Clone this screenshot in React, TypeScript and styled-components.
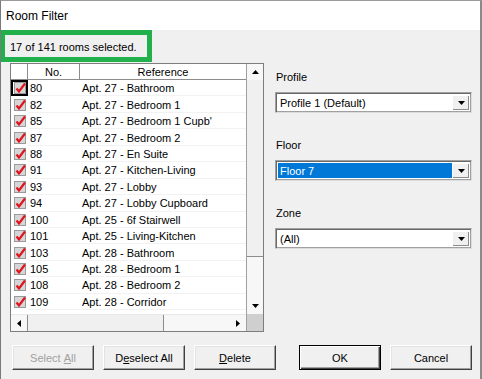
import React from "react";
import styled, { createGlobalStyle, css } from "styled-components";

const GlobalStyle = createGlobalStyle`
  html, body {
    margin: 0;
    padding: 0;
    background: #f0f0f0;
  }
  body {
    font-family: "Liberation Sans", Arial, sans-serif;
    font-size: 11px;
    color: #000;
  }
`;

const rooms = [
  { no: 80, ref: "Apt. 27 - Bathroom" },
  { no: 82, ref: "Apt. 27 - Bedroom 1" },
  { no: 85, ref: "Apt. 27 - Bedroom 1 Cupb'" },
  { no: 87, ref: "Apt. 27 - Bedroom 2" },
  { no: 88, ref: "Apt. 27 - En Suite" },
  { no: 91, ref: "Apt. 27 - Kitchen-Living" },
  { no: 93, ref: "Apt. 27 - Lobby" },
  { no: 94, ref: "Apt. 27 - Lobby Cupboard" },
  { no: 100, ref: "Apt. 25 - 6f Stairwell" },
  { no: 101, ref: "Apt. 25 - Living-Kitchen" },
  { no: 103, ref: "Apt. 28 - Bathroom" },
  { no: 105, ref: "Apt. 28 - Bedroom 1" },
  { no: 108, ref: "Apt. 28 - Bedroom 2" },
  { no: 109, ref: "Apt. 28 - Corridor" },
];

const Window = styled.div`
  width: 482px;
  height: 379px;
  box-sizing: border-box;
  display: flex;
  flex-direction: column;
  border-left: 1px solid #7a7a7a;
  border-right: 2px solid #8a8a8a;
  border-top: 1px solid #9a9a9a;
  overflow: hidden;
`;

const TitleBar = styled.div`
  height: 29px;
  flex: none;
  background: #fff;
  display: flex;
  align-items: center;
  padding-left: 5px;
  font-size: 12px;
`;

const Body = styled.div`
  flex: 1;
  background: #f0f0f0;
  display: flex;
  flex-direction: column;
`;

const Status = styled.div`
  width: 152px;
  height: 32px;
  box-sizing: border-box;
  margin-left: -1px;
  border: 5px solid #22b04c;
  display: flex;
  align-items: center;
  padding-left: 5px;
  padding-top: 2px;
`;

const Main = styled.div`
  display: flex;
  margin-top: 1px;
  padding-left: 9px;
`;

const ListBox = styled.div`
  width: 254px;
  height: 269px;
  box-sizing: border-box;
  border: 1px solid #7d7d7d;
  background: #fff;
  display: grid;
  grid-template-columns: 1fr 17px;
  grid-template-rows: 1fr 17px;
`;

const Table = styled.div`
  display: grid;
  grid-template-columns: 17px 52px 1fr;
  grid-auto-rows: 16.45px;
  grid-template-rows: 16px;
  align-content: start;
  overflow: hidden;
`;

const HeadCell = styled.div<{ $last?: boolean }>`
  display: flex;
  align-items: center;
  justify-content: center;
  border-bottom: 1px solid #8c8c8c;
  border-right: ${(p) => (p.$last ? "none" : "1px solid #8c8c8c")};
  background: #fff;
  padding-top: 1px;
`;

const CheckCell = styled.div<{ $focus?: boolean }>`
  display: flex;
  align-items: center;
  justify-content: center;
  box-sizing: border-box;
  ${(p) =>
    p.$focus &&
    css`
      outline: 2px solid #000;
      outline-offset: -2px;
    `}
`;

const Cell = styled.div`
  display: flex;
  align-items: center;
  padding-left: 2px;
  padding-top: 1px;
  border-bottom: 1px solid #f2f2f2;
  white-space: nowrap;
  overflow: hidden;
`;

const VScroll = styled.div`
  display: flex;
  flex-direction: column;
  border-left: 1px solid #a0a0a0;
  background: #f7f7f7;
`;

const HScroll = styled.div`
  display: flex;
  border-top: 1px solid #e8e8e8;
  background: #f7f7f7;
`;

const ArrowBtn = styled.div`
  width: 16px;
  height: 16px;
  flex: none;
  display: flex;
  align-items: center;
  justify-content: center;
`;

const VThumb = styled.div`
  height: 176px;
  background: #f0f0f0;
  border-bottom: 1px solid #8c8c8c;
`;

const HThumb = styled.div`
  width: 135px;
  background: #f0f0f0;
  border-left: 1px solid #8c8c8c;
  border-right: 1px solid #8c8c8c;
`;

const Track = styled.div`
  flex: 1;
`;

const Corner = styled.div`
  background: #cfcfcf;
  border-left: 1px solid #a0a0a0;
`;

const Side = styled.div`
  width: 197px;
  margin-left: 11px;
  padding-top: 7px;
  display: flex;
  flex-direction: column;
`;

const Field = styled.div`
  display: flex;
  flex-direction: column;
  gap: 8px;
  margin-bottom: 25px;
`;

const Label = styled.div`
  height: 14px;
  line-height: 14px;
  padding-left: 1px;
`;

const Select = styled.div`
  height: 21px;
  box-sizing: border-box;
  display: flex;
  background: #fff;
  border: 1px solid;
  border-color: #a0a0a0 #dcdcdc #dcdcdc #a0a0a0;
  box-shadow: inset 1px 1px 0 #696969, inset -1px -1px 0 #a0a0a0;
  padding: 2px;
`;

const SelectText = styled.div<{ $selected?: boolean }>`
  flex: 1;
  display: flex;
  align-items: center;
  padding-left: 2px;
  ${(p) =>
    p.$selected &&
    css`
      background: #0078d7;
      color: #fff;
    `}
`;

const DropBtn = styled.div`
  width: 16px;
  flex: none;
  display: flex;
  align-items: center;
  justify-content: center;
  background: #f0f0f0;
  border-left: 1px solid #fff;
  border-top: 1px solid #fff;
  box-shadow: inset -1px -1px 0 #8c8c8c;
`;

const ButtonRow = styled.div`
  display: flex;
  margin-top: 13px;
  padding-left: 11px;
  padding-right: 8px;
`;

const Group = styled.div<{ $right?: boolean }>`
  display: flex;
  gap: 9px;
  margin-left: ${(p) => (p.$right ? "auto" : "0")};
`;

const Button = styled.div<{ $disabled?: boolean; $default?: boolean }>`
  width: 82px;
  height: 25px;
  box-sizing: border-box;
  display: flex;
  align-items: center;
  justify-content: center;
  background: #f0f0f0;
  border: 1px solid;
  border-color: #fff #404040 #404040 #fff;
  box-shadow: inset -1px -1px 0 #a0a0a0, inset 1px 1px 0 #e3e3e3;
  color: ${(p) => (p.$disabled ? "#a0a0a0" : "#000")};
  ${(p) =>
    p.$default &&
    css`
      border-color: #000;
      box-shadow: inset 1px 1px 0 #fff, inset -1px -1px 0 #404040,
        inset -2px -2px 0 #a0a0a0;
    `}
  u {
    text-decoration-thickness: 1px;
  }
`;

const CheckIcon = () => (
  <svg width="14" height="14" viewBox="0 0 14 14">
    <rect x="1.5" y="1.5" width="11" height="11" fill="#d6d6d6" stroke="#9a9a9a" />
    <polyline
      points="3.5,7.5 6,10.5 12,2.5"
      fill="none"
      stroke="#e0141e"
      strokeWidth="2.2"
    />
  </svg>
);

const Tri = ({ dir }: { dir: "up" | "down" | "left" | "right" }) => {
  const pts = {
    up: "0,4 7,4 3.5,0",
    down: "0,0 7,0 3.5,4",
    left: "4,0 4,7 0,3.5",
    right: "0,0 0,7 4,3.5",
  }[dir];
  const horiz = dir === "left" || dir === "right";
  return (
    <svg width={horiz ? 4 : 7} height={horiz ? 7 : 4} viewBox={horiz ? "0 0 4 7" : "0 0 7 4"}>
      <polygon points={pts} fill="#000" />
    </svg>
  );
};

const App = () => {
  return (
    <>
      <GlobalStyle />
      <Window>
        <TitleBar>Room Filter</TitleBar>
        <Body>
          <Status>17 of 141 rooms selected.</Status>
          <Main>
            <ListBox>
              <Table>
                <HeadCell />
                <HeadCell>No.</HeadCell>
                <HeadCell $last>Reference</HeadCell>
                {rooms.map((r, i) => (
                  <React.Fragment key={r.no}>
                    <CheckCell $focus={i === 0}>
                      <CheckIcon />
                    </CheckCell>
                    <Cell>{r.no}</Cell>
                    <Cell>{r.ref}</Cell>
                  </React.Fragment>
                ))}
              </Table>
              <VScroll>
                <ArrowBtn>
                  <Tri dir="up" />
                </ArrowBtn>
                <VThumb />
                <Track />
                <ArrowBtn>
                  <Tri dir="down" />
                </ArrowBtn>
              </VScroll>
              <HScroll>
                <ArrowBtn>
                  <Tri dir="left" />
                </ArrowBtn>
                <HThumb />
                <Track />
                <ArrowBtn>
                  <Tri dir="right" />
                </ArrowBtn>
              </HScroll>
              <Corner />
            </ListBox>
            <Side>
              <Field>
                <Label>Profile</Label>
                <Select>
                  <SelectText>Profile 1 (Default)</SelectText>
                  <DropBtn>
                    <Tri dir="down" />
                  </DropBtn>
                </Select>
              </Field>
              <Field>
                <Label>Floor</Label>
                <Select>
                  <SelectText $selected>Floor 7</SelectText>
                  <DropBtn>
                    <Tri dir="down" />
                  </DropBtn>
                </Select>
              </Field>
              <Field>
                <Label>Zone</Label>
                <Select>
                  <SelectText>(All)</SelectText>
                  <DropBtn>
                    <Tri dir="down" />
                  </DropBtn>
                </Select>
              </Field>
            </Side>
          </Main>
          <ButtonRow>
            <Group>
              <Button $disabled>
                Select&nbsp;<u>A</u>ll
              </Button>
              <Button>
                D<u>e</u>select All
              </Button>
              <Button>
                <u>D</u>elete
              </Button>
            </Group>
            <Group $right>
              <Button $default>OK</Button>
              <Button>Cancel</Button>
            </Group>
          </ButtonRow>
        </Body>
      </Window>
    </>
  );
};

export default App;
